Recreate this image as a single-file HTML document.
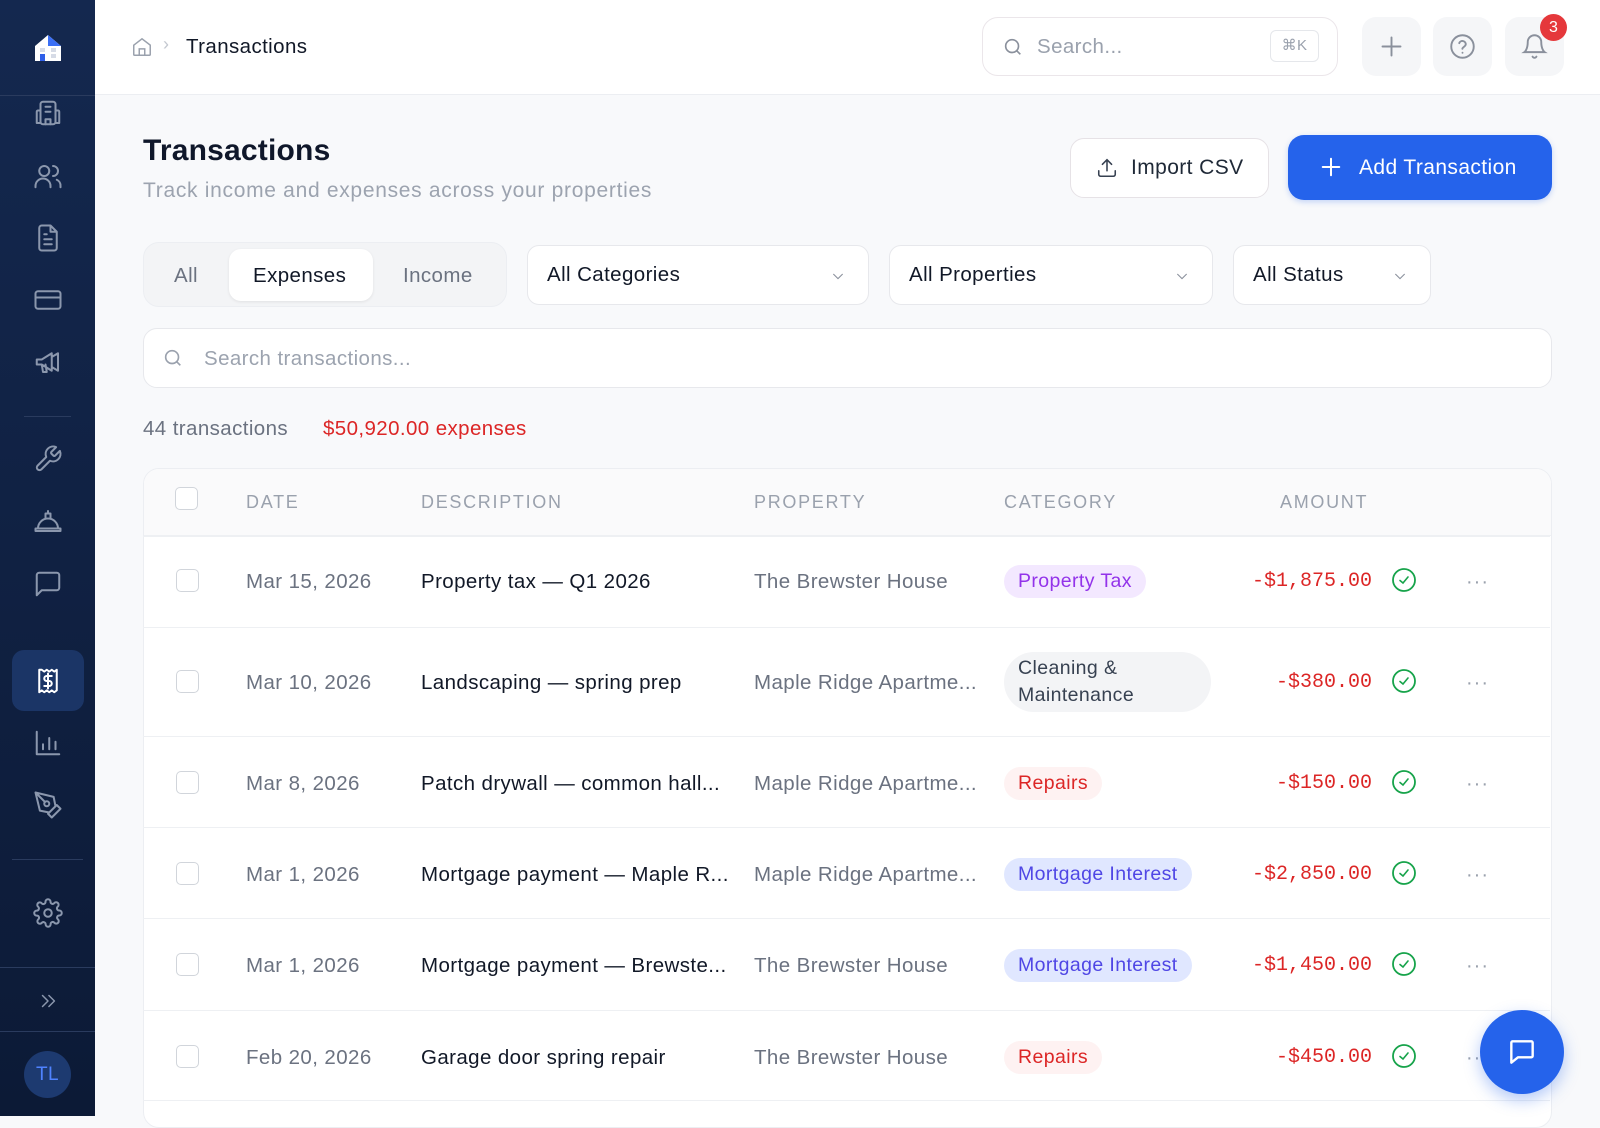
<!DOCTYPE html>
<html><head><meta charset="utf-8"><style>
*{box-sizing:border-box;margin:0;padding:0}
body{width:1600px;height:1116px;overflow:hidden;background:#f8f9fb;font-family:"Liberation Sans",Arial,sans-serif;position:relative;color:#111827;letter-spacing:.4px}
.abs{position:absolute}
.sb{left:0;top:0;width:95px;height:1116px;background:linear-gradient(#14284f,#0c1a36)}
.sb svg{position:absolute;left:33px;width:30px;height:30px;fill:none;stroke:#8b97ad;stroke-width:1.6;stroke-linecap:round;stroke-linejoin:round}
.div{position:absolute;height:1px;background:#2a3b5e}
.hdr{left:95px;top:0;width:1505px;height:95px;background:#fff;border-bottom:1px solid #eceef2}
.ib{width:59px;height:59px;border-radius:14px;background:#f5f6f8;top:17px}
.ib svg{position:absolute;left:16px;top:16px;width:27px;height:27px;fill:none;stroke:#8a909c;stroke-width:1.7;stroke-linecap:round}
.box{background:#fff;border:1px solid #e7e8ec;border-radius:12px}
.sel{font-size:20.5px;color:#111827;padding-left:19px;line-height:58px}
.sel svg{position:absolute;right:22px;top:22px;width:16px;height:16px;fill:none;stroke:#8a909c;stroke-width:1.6}
.th{font-size:18px;color:#9aa1ad;letter-spacing:1.7px;top:492px}
.row{left:143px;width:1407px;border-top:1px solid #eef0f3}
.cell{position:absolute;font-size:20.5px;white-space:nowrap}
.cb{position:absolute;left:33px;width:23px;height:23px;border:1.5px solid #d1d5db;border-radius:5px;background:#fff}
.pill{position:absolute;left:861px;height:33px;line-height:33px;padding:0 14px;border-radius:17px;font-size:19.5px}
.amt{position:absolute;right:178px;font-family:"Liberation Mono",monospace;font-size:20px;color:#dc2626;letter-spacing:0}
.chk{position:absolute;left:1248px;width:26px;height:26px}
.dots{position:absolute;left:1323px;font-size:20px;color:#9aa1ad;letter-spacing:1px}
</style></head><body>
<div class="abs sb">
 <svg style="top:32px;left:32px;width:32px;height:32px;stroke:none" viewBox="0 0 32 32"><path d="M3 14 16 3l13 11v15H3z" fill="#fff"/><path d="M16 3l13 11H16z" fill="#3b6ff5"/><rect x="8" y="16" width="5" height="4" fill="#d6dbe6"/><rect x="19" y="16" width="5" height="4" fill="#d6dbe6"/><rect x="8" y="22" width="5" height="7" fill="#2f5fe8"/><rect x="19" y="22" width="5" height="4" fill="#d6dbe6"/></svg>
 <div class="div" style="left:0;width:95px;top:95px"></div>
 <svg style="top:98px" viewBox="0 0 24 24"><rect x="6" y="3" width="12" height="18" rx="2"/><path d="M6 10H4a1 1 0 0 0-1 1v9h3M18 10h2a1 1 0 0 1 1 1v9h-3M10 7h4M10 11h4M10 21v-4h4v4"/></svg>
 <svg style="top:161px" viewBox="0 0 24 24"><circle cx="9" cy="8" r="4"/><path d="M2 21v-1a6 6 0 0 1 12 0v1M16 4a4 4 0 0 1 0 8M19 15a5 5 0 0 1 3 5v1"/></svg>
 <svg style="top:223px" viewBox="0 0 24 24"><path d="M14 2H7a2 2 0 0 0-2 2v16a2 2 0 0 0 2 2h10a2 2 0 0 0 2-2V7zM14 2v5h5M9 13h6M9 17h6M9 9h2"/></svg>
 <svg style="top:285px" viewBox="0 0 24 24"><rect x="2" y="5" width="20" height="14" rx="2"/><path d="M2 10h20"/></svg>
 <svg style="top:347px" viewBox="0 0 24 24"><path d="M3 10v4h4l8 5V5L7 10zM15 8l5-3v14l-5-3M7 14l1 6h3l-1-6"/></svg>
 <div class="div" style="left:24px;width:47px;top:416px"></div>
 <svg style="top:444px" viewBox="0 0 24 24"><path d="M14.7 6.3a1 1 0 0 0 0 1.4l1.6 1.6a1 1 0 0 0 1.4 0l3.8-3.8a6 6 0 0 1-7.9 7.9l-6.9 6.9a2.1 2.1 0 0 1-3-3l6.9-6.9a6 6 0 0 1 7.9-7.9z"/></svg>
 <svg style="top:506px" viewBox="0 0 24 24"><path d="M2 18h20v2H2zM4 18a8 8 0 0 1 16 0M10 10V6h4v4M12 4v2"/></svg>
 <svg style="top:569px" viewBox="0 0 24 24"><path d="M21 15a2 2 0 0 1-2 2H7l-4 4V5a2 2 0 0 1 2-2h14a2 2 0 0 1 2 2z"/></svg>
 <div class="abs" style="left:12px;top:650px;width:72px;height:61px;border-radius:12px;background:#1b3566"></div>
 <svg style="top:666px;stroke:#fff" viewBox="0 0 24 24"><path d="M5 3v18l2-1.5 2 1.5 2-1.5 2 1.5 2-1.5 2 1.5 2-1.5V3l-2 1.5-2-1.5-2 1.5-2-1.5-2 1.5L7 3zM15 8h-4a2 2 0 0 0 0 4h2a2 2 0 0 1 0 4H9M12 6v12"/></svg>
 <svg style="top:728px" viewBox="0 0 24 24"><path d="M3 3v18h18M8 17v-4M13 17V8M18 17v-6"/></svg>
 <svg style="top:790px" viewBox="0 0 24 24"><path d="M12 19l7-7 3 3-7 7zM18 13l-1.5-7.5L2 2l3.5 14.5L13 18zM2 2l7.6 7.6"/><circle cx="11" cy="11" r="2"/></svg>
 <div class="div" style="left:12px;width:71px;top:859px"></div>
 <svg style="top:898px" viewBox="0 0 24 24"><circle cx="12" cy="12" r="3"/><path d="M19.4 15a1.7 1.7 0 0 0 .3 1.8l.1.1a2 2 0 1 1-2.8 2.8l-.1-.1a1.7 1.7 0 0 0-1.8-.3 1.7 1.7 0 0 0-1 1.5V21a2 2 0 1 1-4 0v-.1a1.7 1.7 0 0 0-1.1-1.5 1.7 1.7 0 0 0-1.8.3l-.1.1a2 2 0 1 1-2.800-2.8l.1-.1a1.7 1.7 0 0 0 .3-1.8 1.7 1.7 0 0 0-1.5-1H3a2 2 0 1 1 0-4h.1a1.7 1.7 0 0 0 1.5-1.1 1.7 1.7 0 0 0-.3-1.8l-.1-.1a2 2 0 1 1 2.8-2.8l.1.1a1.7 1.7 0 0 0 1.8.3H9a1.7 1.7 0 0 0 1-1.5V3a2 2 0 1 1 4 0v.1a1.7 1.7 0 0 0 1 1.5 1.7 1.7 0 0 0 1.8-.3l.1-.1a2 2 0 1 1 2.8 2.8l-.1.1a1.7 1.7 0 0 0-.3 1.8V9a1.7 1.7 0 0 0 1.5 1H21a2 2 0 1 1 0 4h-.1a1.7 1.7 0 0 0-1.500 1z"/></svg>
 <div class="div" style="left:0;width:95px;top:967px"></div>
 <svg style="top:990px;width:22px;height:22px;left:37px" viewBox="0 0 24 24"><path d="M6 6l6 6-6 6M13 6l6 6-6 6"/></svg>
 <div class="div" style="left:0;width:95px;top:1031px"></div>
 <div class="abs" style="left:24px;top:1051px;width:47px;height:47px;border-radius:50%;background:#1d3a70;color:#4f83ff;font-size:19px;text-align:center;line-height:47px">TL</div>
</div>

<div class="abs hdr"></div>
<svg class="abs" style="left:131px;top:36px;width:22px;height:22px;fill:none;stroke:#9aa1ad;stroke-width:1.6" viewBox="0 0 24 24"><path d="M3 10l9-7 9 7v10a1 1 0 0 1-1 1H4a1 1 0 0 1-1-1zM9 21v-7h6v7"/></svg>
<div class="abs" style="left:163px;top:34px;color:#c4c8d0;font-size:18px">›</div>
<div class="abs" style="left:186px;top:35px;font-size:20.5px;color:#111827;font-weight:500">Transactions</div>
<div class="abs box" style="left:982px;top:17px;width:356px;height:59px;border-radius:16px;border-color:#ebe6ea"></div>
<svg class="abs" style="left:1002px;top:36px;width:22px;height:22px;fill:none;stroke:#8a909c;stroke-width:1.8" viewBox="0 0 24 24"><circle cx="11" cy="11" r="7"/><path d="M20 20l-4-4"/></svg>
<div class="abs" style="left:1037px;top:35px;font-size:20.5px;color:#9aa1ad">Search...</div>
<div class="abs" style="left:1270px;top:30px;width:49px;height:32px;border:1px solid #e5e7eb;border-radius:6px;font-size:15px;color:#9aa1ad;text-align:center;line-height:30px">⌘K</div>
<div class="abs ib" style="left:1362px"><svg viewBox="0 0 24 24"><path d="M12 4v16M4 12h16"/></svg></div>
<div class="abs ib" style="left:1433px"><svg viewBox="0 0 24 24"><circle cx="12" cy="12" r="10"/><path d="M9.1 9a3 3 0 0 1 5.8 1c0 2-3 2.5-3 4M12 17.5v.1"/></svg></div>
<div class="abs ib" style="left:1505px"><svg viewBox="0 0 24 24"><path d="M6 8a6 6 0 0 1 12 0c0 7 3 9 3 9H3s3-2 3-9M10.3 21a1.9 1.9 0 0 0 3.4 0"/></svg></div>
<div class="abs" style="left:1540px;top:14px;width:27px;height:27px;border-radius:50%;background:#e5383b;color:#fff;font-size:16px;text-align:center;line-height:27px;letter-spacing:0">3</div>

<div class="abs" style="left:143px;top:134px;font-size:30px;font-weight:600;color:#0f172a;letter-spacing:.2px">Transactions</div>
<div class="abs" style="left:143px;top:179px;font-size:21px;color:#9ca3af;letter-spacing:.7px">Track income and expenses across your properties</div>
<div class="abs box" style="left:1070px;top:138px;width:199px;height:60px;border-radius:14px;border-color:#e6e2e6"></div>
<svg class="abs" style="left:1096px;top:157px;width:22px;height:22px;fill:none;stroke:#374151;stroke-width:1.7;stroke-linecap:round" viewBox="0 0 24 24"><path d="M21 15v4a2 2 0 0 1-2 2H5a2 2 0 0 1-2-2v-4M17 8l-5-5-5 5M12 3v12"/></svg>
<div class="abs" style="left:1131px;top:156px;font-size:21px;color:#1f2937">Import CSV</div>
<div class="abs" style="left:1288px;top:135px;width:264px;height:65px;border-radius:16px;background:#2563eb;box-shadow:0 2px 6px rgba(37,99,235,.25)"></div>
<svg class="abs" style="left:1320px;top:156px;width:22px;height:22px;fill:none;stroke:#fff;stroke-width:2.2;stroke-linecap:round" viewBox="0 0 24 24"><path d="M12 3v18M3 12h18"/></svg>
<div class="abs" style="left:1359px;top:156px;font-size:21px;color:#fff;font-weight:500">Add Transaction</div>

<div class="abs" style="left:143px;top:242px;width:364px;height:65px;border-radius:16px;background:#f3f4f6;border:1px solid #eceef2"></div>
<div class="abs" style="left:174px;top:264px;font-size:20.5px;color:#6b7280">All</div>
<div class="abs" style="left:229px;top:249px;width:144px;height:52px;border-radius:12px;background:#fff;box-shadow:0 1px 3px rgba(0,0,0,.08)"></div>
<div class="abs" style="left:253px;top:264px;font-size:20.5px;color:#111827">Expenses</div>
<div class="abs" style="left:403px;top:264px;font-size:20.5px;color:#6b7280">Income</div>
<div class="abs box sel" style="left:527px;top:245px;width:342px;height:60px">All Categories<svg viewBox="0 0 24 24"><path d="M5 9l7 7 7-7"/></svg></div>
<div class="abs box sel" style="left:889px;top:245px;width:324px;height:60px">All Properties<svg viewBox="0 0 24 24"><path d="M5 9l7 7 7-7"/></svg></div>
<div class="abs box sel" style="left:1233px;top:245px;width:198px;height:60px">All Status<svg viewBox="0 0 24 24"><path d="M5 9l7 7 7-7"/></svg></div>

<div class="abs box" style="left:143px;top:328px;width:1409px;height:60px;border-radius:14px"></div>
<svg class="abs" style="left:162px;top:347px;width:22px;height:22px;fill:none;stroke:#9aa1ad;stroke-width:1.8" viewBox="0 0 24 24"><circle cx="11" cy="11" r="7"/><path d="M20 20l-4-4"/></svg>
<div class="abs" style="left:204px;top:347px;font-size:20.5px;color:#9ca3af">Search transactions...</div>
<div class="abs" style="left:143px;top:417px;font-size:20.5px;color:#6b7280">44 transactions</div>
<div class="abs" style="left:323px;top:417px;font-size:20.5px;color:#dc2626">$50,920.00 expenses</div>

<div class="abs" style="left:143px;top:468px;width:1409px;height:660px;border-radius:16px;background:#fff;border:1px solid #eceef2;overflow:hidden">
 <div style="position:absolute;left:0;top:0;width:100%;height:67px;background:#fafafb;border-bottom:1px solid #eef0f3"></div>
</div>
<div class="cb" style="left:175px;top:487px"></div>
<div class="abs th" style="left:246px">DATE</div>
<div class="abs th" style="left:421px">DESCRIPTION</div>
<div class="abs th" style="left:754px">PROPERTY</div>
<div class="abs th" style="left:1004px">CATEGORY</div>
<div class="abs th" style="left:1280px">AMOUNT</div>

<svg width="0" height="0" style="position:absolute"><defs><symbol id="ck" viewBox="0 0 26 26"><circle cx="13" cy="13" r="11" fill="none" stroke="#16a34a" stroke-width="1.8"/><path d="M9 13.5l3 2.5 5-6" fill="none" stroke="#16a34a" stroke-width="1.6" stroke-linecap="round"/></symbol></defs></svg>

<div class="abs row" style="top:536px;height:91px">
 <div class="cb" style="top:32px"></div><div class="cell" style="left:103px;top:33px;color:#6b7280">Mar 15, 2026</div>
 <div class="cell" style="left:278px;top:33px;color:#111827">Property tax — Q1 2026</div>
 <div class="cell" style="left:611px;top:33px;color:#6b7280">The Brewster House</div>
 <div class="pill" style="top:28px;background:#f3e8ff;color:#9333ea">Property Tax</div>
 <div class="amt" style="top:33px">-$1,875.00</div><svg class="chk" style="top:30px"><use href="#ck"/></svg><div class="dots" style="top:34px">···</div>
</div>
<div class="abs row" style="top:627px;height:109px">
 <div class="cb" style="top:42px"></div><div class="cell" style="left:103px;top:43px;color:#6b7280">Mar 10, 2026</div>
 <div class="cell" style="left:278px;top:43px;color:#111827">Landscaping — spring prep</div>
 <div class="cell" style="left:611px;top:43px;color:#6b7280">Maple Ridge Apartme...</div>
 <div class="pill" style="top:24px;height:60px;width:207px;line-height:27px;padding-top:3px;border-radius:30px;background:#f3f4f6;color:#374151;white-space:normal">Cleaning &amp;<br>Maintenance</div>
 <div class="amt" style="top:43px">-$380.00</div><svg class="chk" style="top:40px"><use href="#ck"/></svg><div class="dots" style="top:44px">···</div>
</div>
<div class="abs row" style="top:736px;height:91px">
 <div class="cb" style="top:34px"></div><div class="cell" style="left:103px;top:35px;color:#6b7280">Mar 8, 2026</div>
 <div class="cell" style="left:278px;top:35px;color:#111827">Patch drywall — common hall...</div>
 <div class="cell" style="left:611px;top:35px;color:#6b7280">Maple Ridge Apartme...</div>
 <div class="pill" style="top:30px;background:#fef2f2;color:#dc2626">Repairs</div>
 <div class="amt" style="top:35px">-$150.00</div><svg class="chk" style="top:32px"><use href="#ck"/></svg><div class="dots" style="top:36px">···</div>
</div>
<div class="abs row" style="top:827px;height:91px">
 <div class="cb" style="top:34px"></div><div class="cell" style="left:103px;top:35px;color:#6b7280">Mar 1, 2026</div>
 <div class="cell" style="left:278px;top:35px;color:#111827">Mortgage payment — Maple R...</div>
 <div class="cell" style="left:611px;top:35px;color:#6b7280">Maple Ridge Apartme...</div>
 <div class="pill" style="top:30px;background:#e0e7ff;color:#4f46e5">Mortgage Interest</div>
 <div class="amt" style="top:35px">-$2,850.00</div><svg class="chk" style="top:32px"><use href="#ck"/></svg><div class="dots" style="top:36px">···</div>
</div>
<div class="abs row" style="top:918px;height:92px">
 <div class="cb" style="top:34px"></div><div class="cell" style="left:103px;top:35px;color:#6b7280">Mar 1, 2026</div>
 <div class="cell" style="left:278px;top:35px;color:#111827">Mortgage payment — Brewste...</div>
 <div class="cell" style="left:611px;top:35px;color:#6b7280">The Brewster House</div>
 <div class="pill" style="top:30px;background:#e0e7ff;color:#4f46e5">Mortgage Interest</div>
 <div class="amt" style="top:35px">-$1,450.00</div><svg class="chk" style="top:32px"><use href="#ck"/></svg><div class="dots" style="top:36px">···</div>
</div>
<div class="abs row" style="top:1010px;height:91px;border-bottom:1px solid #eef0f3">
 <div class="cb" style="top:34px"></div><div class="cell" style="left:103px;top:35px;color:#6b7280">Feb 20, 2026</div>
 <div class="cell" style="left:278px;top:35px;color:#111827">Garage door spring repair</div>
 <div class="cell" style="left:611px;top:35px;color:#6b7280">The Brewster House</div>
 <div class="pill" style="top:30px;background:#fef2f2;color:#dc2626">Repairs</div>
 <div class="amt" style="top:35px">-$450.00</div><svg class="chk" style="top:32px"><use href="#ck"/></svg><div class="dots" style="top:36px">···</div>
</div>

<div class="abs" style="left:1480px;top:1010px;width:84px;height:84px;border-radius:50%;background:#2563eb;box-shadow:0 6px 16px rgba(37,99,235,.35)"></div>
<svg class="abs" style="left:1506px;top:1036px;width:32px;height:32px;fill:none;stroke:#fff;stroke-width:1.8;stroke-linejoin:round" viewBox="0 0 24 24"><path d="M4 5a1 1 0 0 1 1-1h14a1 1 0 0 1 1 1v10a1 1 0 0 1-1 1H9l-5 4z"/></svg>
</body></html>
